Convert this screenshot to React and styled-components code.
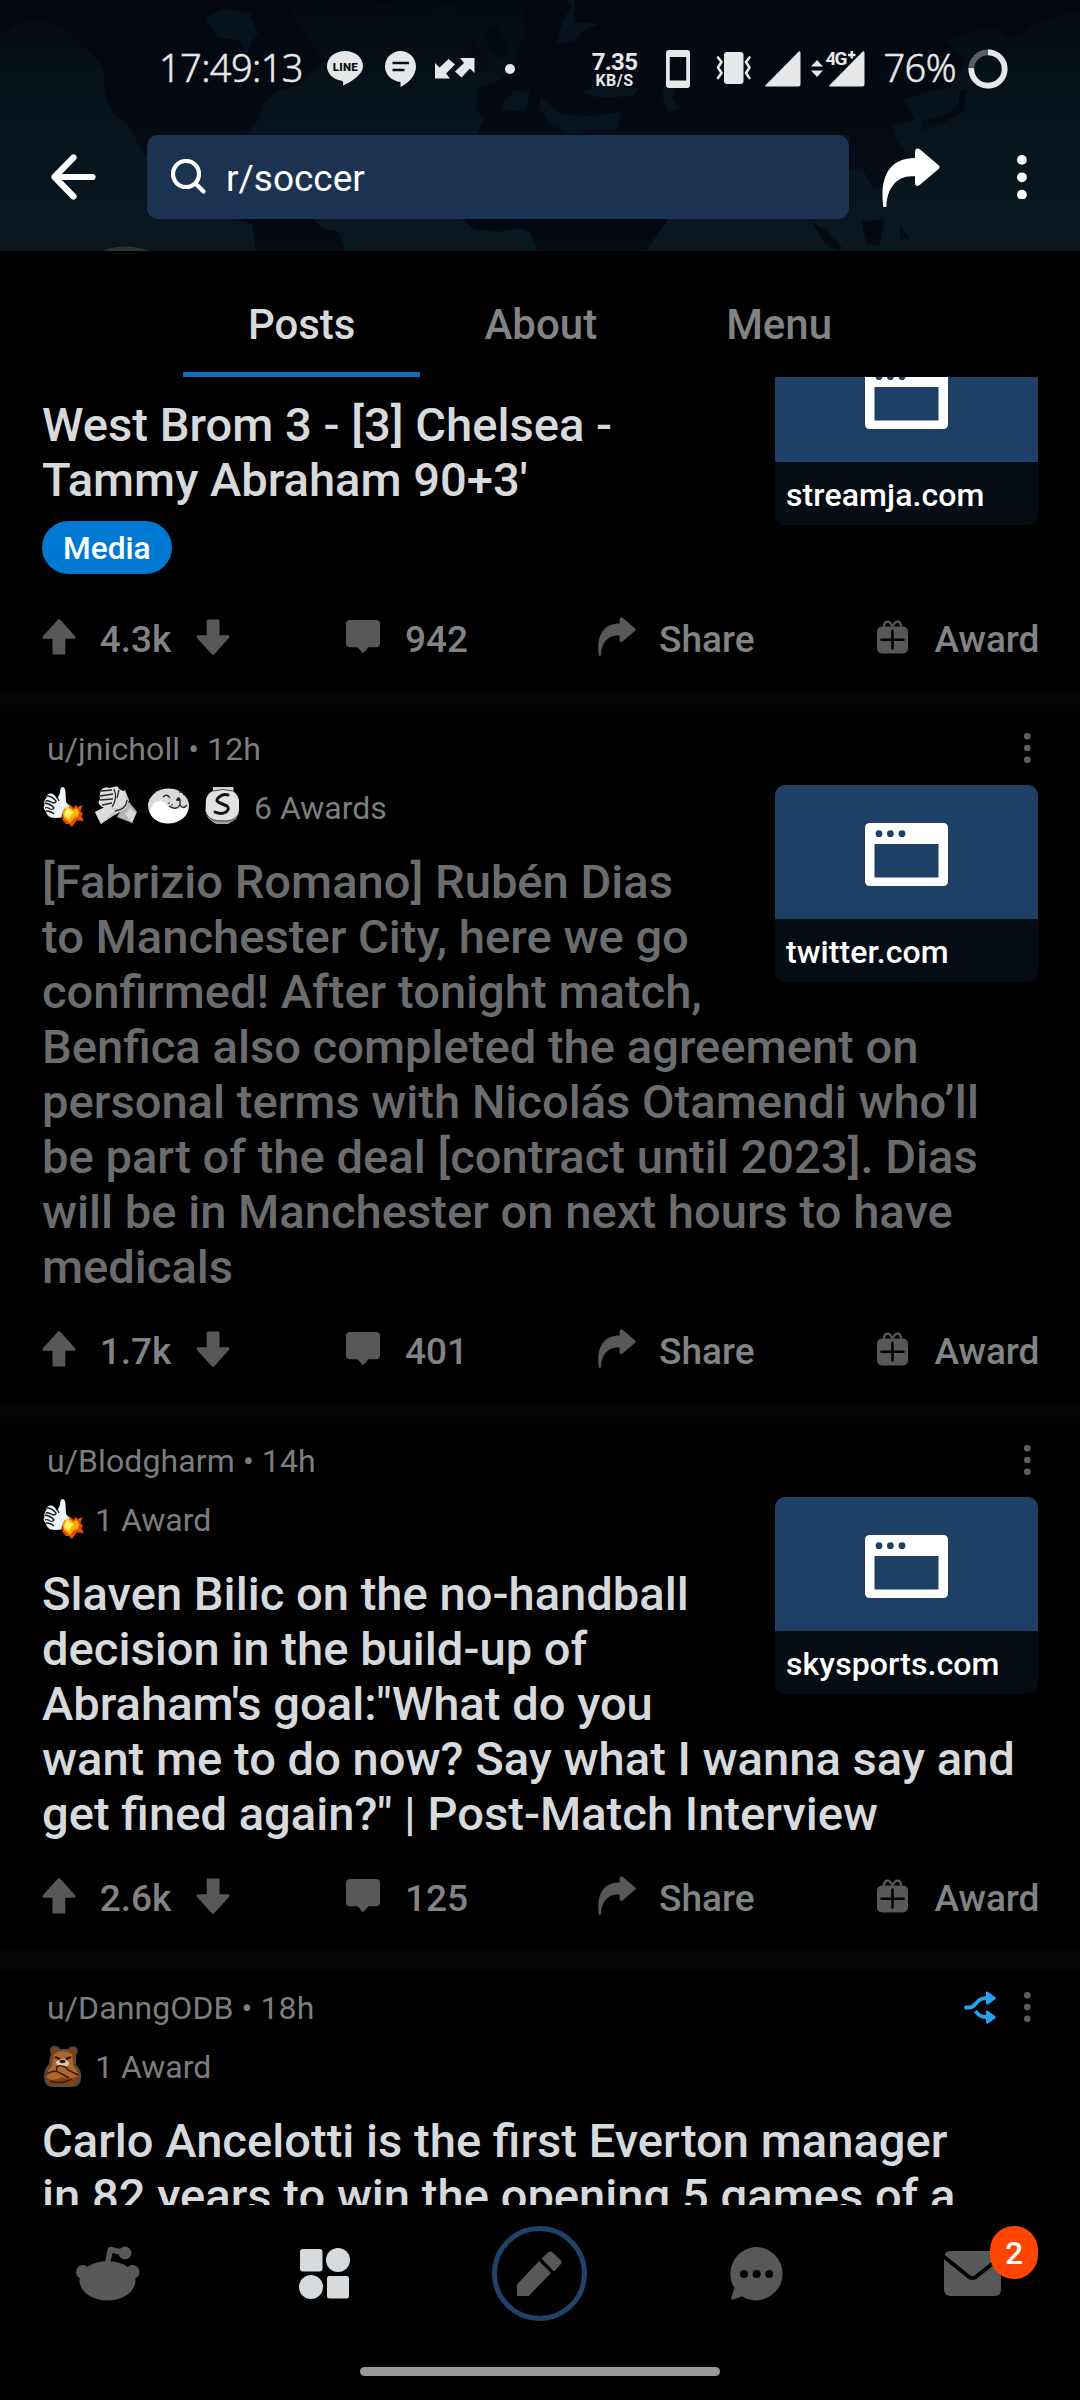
import styled, { createGlobalStyle, css } from "styled-components";

const POSTS = [
  {
    id: 1,
    title: "West Brom 3 - [3] Chelsea - Tammy Abraham 90+3'",
    link: "streamja.com",
    flair: "Media",
    votes: "4.3k",
    comments: "942",
  },
  {
    id: 2,
    author: "jnicholl",
    age: "12h",
    awards: ["rocket", "bump", "seal", "silver"],
    awardLabel: "6 Awards",
    title:
      "[Fabrizio Romano] Rubén Dias to Manchester City, here we go confirmed! After tonight match, Benfica also completed the agreement on personal terms with Nicolás Otamendi who’ll be part of the deal [contract until 2023]. Dias will be in Manchester on next hours to have medicals",
    link: "twitter.com",
    votes: "1.7k",
    comments: "401",
    isRead: true,
  },
  {
    id: 3,
    author: "Blodgharm",
    age: "14h",
    awards: ["rocket"],
    awardLabel: "1 Award",
    title:
      "Slaven Bilic on the no-handball decision in the build-up of Abraham's goal:\"What do you want me to do now? Say what I wanna say and get fined again?\" | Post-Match Interview",
    link: "skysports.com",
    votes: "2.6k",
    comments: "125",
  },
  {
    id: 4,
    author: "DanngODB",
    age: "18h",
    awards: ["bear"],
    awardLabel: "1 Award",
    title: "Carlo Ancelotti is the first Everton manager\nin 82 years to win the opening 5 games of a",
    isCrosspost: true,
  },
];

/* ---------- icons ---------- */

const MapBackdrop = () => (
  <svg width="1080" height="251" viewBox="0 0 1080 251">
    <defs>
      <linearGradient id="ocean" x1="0" y1="0" x2="0" y2="1">
        <stop offset="0" stopColor="#050a11" />
        <stop offset="0.4" stopColor="#07131a" />
        <stop offset="1" stopColor="#09171f" />
      </linearGradient>
      <linearGradient id="land" x1="0" y1="0" x2="0" y2="1">
        <stop offset="0" stopColor="#04070f" />
        <stop offset="1" stopColor="#060c15" />
      </linearGradient>
    </defs>
    <rect width="1080" height="251" fill="url(#ocean)" />
    <path
      d="M0 36L14 24L40 21L62 27L80 44L94 56L103 68L105 96L113 114L126 124L136 140L147 158L165 175L200 190L215 170L246 135L260 118L263 104L276 92L300 84L312 70L326 60L312 44L296 18L288 0L0 0Z"
      fill="url(#land)"
    />
    <path d="M205 18L225 8L250 14L258 34L250 44L247 58L240 40L218 38Z" fill="#07131a" />
    <path d="M334 0L345 12L352 20L367 23L373 8L395 0Z" fill="url(#land)" />
    <path d="M428 4L440 10L455 8L462 0L432 0Z" fill="url(#land)" />
    <path d="M236 219L252 224L256 251L345 251L339 232L322 228L313 219Z" fill="url(#land)" />
    <path d="M463 219L475 230L500 232L520 228L530 233L538 251L646 251L668 219Z" fill="url(#land)" />
    <path d="M474 40L480 52L490 60L486 72L474 70L470 52ZM484 32L496 26L505 40L510 52L498 60L490 48Z" fill="url(#land)" />
    <path
      d="M478 88L476 110L484 120L476 134L540 135L850 135L846 172L862 168L874 190L900 180L920 170L896 140L893 125L915 120L905 100L925 92L950 88L965 62L946 40L975 30L1000 30L1010 40L1040 20L1080 12L1080 0L530 0L522 20L528 32L515 50L516 62L500 80Z"
      fill="url(#land)"
    />
    <path d="M563 20L572 6L566 0L575 0L574 22L600 24L584 30L574 42L556 44Z" fill="#07131a" />
    <path d="M540 96L560 114L590 116L620 112L618 130L594 130L570 134L552 126L540 110ZM580 92L600 86L640 88L632 96L600 98ZM666 82L676 86L672 98L680 108L668 112L662 96Z" fill="#07141b" />
    <path d="M505 100L515 90L530 92L525 110L500 112Z" fill="#07141b" />
    <path d="M812 222L826 230L842 247L838 251L826 245ZM862 222L884 219L880 246L866 244ZM900 226L910 238L900 240Z" fill="url(#land)" />
    <path d="M920 122L946 114L958 106L960 90L966 92L964 112L946 122L924 130Z" fill="url(#land)" />
    <circle cx="125.500" cy="310" r="63.500" fill="#333333" />
  </svg>
);

const LineAppIcon = () => (
  <svg width="36" height="35" viewBox="0 0 36 35">
    <path d="M18 0C8 0 0 6.600 0 15.200c0 7.200 6 13 14.500 14.600 2 .4 1.800 1.600 1.500 4.700 6-2.500 20-10.500 20-19.300C36 6.600 28 0 18 0Z" fill="#e6e7e9" />
    <text x="18.200" y="19.500" textAnchor="middle" fontFamily="Roboto, sans-serif" fontSize="11.500" fontWeight="900" textLength="25" fill="#0a1119">
      LINE
    </text>
  </svg>
);

const BubbleIcon = () => (
  <svg width="31" height="36" viewBox="0 0 31 36">
    <path d="M15.500 0C7 0 0 7 0 15.500S7 30 15.500 31v5C24 32 31 24 31 15.500 31 7 24 0 15.500 0Z" fill="#e6e7e9" />
    <path d="M7.500 12H24M7.500 19H19.500" stroke="#0a1119" strokeWidth="2.600" />
  </svg>
);

const ArrowsIcon = () => (
  <svg width="40" height="21" viewBox="0 0 40 21" fill="#e6e7e9">
    <path d="M0 5L4.500 9.500L13.500 1L20 6.500L11 15.500L15 20.500H0ZM39.500 0V15L35 10.500L26.500 19.500L20 13.500L29 5L25 0Z" />
  </svg>
);

const PhoneIcon = () => (
  <svg width="24" height="38" viewBox="0 0 24 38">
    <path fillRule="evenodd" d="M3 0H21Q24 0 24 3V35Q24 38 21 38H3Q0 38 0 35V3Q0 0 3 0ZM3.800 7V30.500H20.200V7Z" fill="#e6e7e9" />
  </svg>
);

const VibrateIcon = () => (
  <svg width="36" height="33" viewBox="0 0 36 33">
    <rect x="8" width="19.500" height="32" rx="3" fill="#e6e7e9" />
    <path d="M2 5.500L5.500 10L2 15.500L5.500 21L2 26M33.500 5.500L30 10L33.500 15.500L30 21L33.500 26" fill="none" stroke="#e6e7e9" strokeWidth="2.600" strokeLinecap="round" strokeLinejoin="round" />
  </svg>
);

const SignalIcon = () => (
  <svg width="36" height="36" viewBox="0 0 36 36">
    <path d="M33.500 .8Q35.500 -.5 35.500 2V33.500Q35.500 35.500 33.500 35.500H1.500Q-.5 35.500 1 33.800Z" fill="#e6e7e9" />
  </svg>
);

const Signal4GIcon = () => (
  <svg width="54" height="36" viewBox="0 0 54 36">
    <path d="M6 9L12 15.500H0ZM6 26L12 19.500H0Z" fill="#e6e7e9" />
    <path d="M51.500 .8Q53.500 -.5 53.500 2V33.500Q53.500 35.500 51.500 35.500H19.500Q17.500 35.500 19 33.800Z" fill="#e6e7e9" />
    <text x="14.500" y="14" fontFamily="Roboto, sans-serif" fontSize="19" fontWeight="700" textLength="22" fill="#e6e7e9" stroke="#060b13" strokeWidth="2" paintOrder="stroke">
      4G
    </text>
    <path d="M37.500 4H44.500M41 .5V7.500" stroke="#060b13" strokeWidth="5" />
    <path d="M37 4H44.500M40.800 0V7.500" stroke="#e6e7e9" strokeWidth="2.500" />
  </svg>
);

const BatteryRing = () => (
  <svg width="40" height="40" viewBox="0 0 40 40" fill="none" strokeWidth="5.700">
    <circle cx="20" cy="20" r="16.700" stroke="#5c6065" />
    <path d="M20 3.300A16.700 16.700 0 1 1 3.300 19.200" stroke="#e6e7e9" />
  </svg>
);

const BackIcon = () => (
  <svg width="46" height="46" viewBox="0 0 46 46" fill="none" stroke="#fff" strokeWidth="6.200" strokeLinecap="round" strokeLinejoin="round">
    <path d="M22.500 3.500L3.500 23L22.500 42.500M4 23H41.500" />
  </svg>
);

const SearchIcon = () => (
  <svg width="36" height="36" viewBox="0 0 36 36" fill="none" stroke="#fff" strokeWidth="4.200" strokeLinecap="round">
    <circle cx="15" cy="15" r="13" />
    <path d="M24.500 24.500L32.500 32.500" />
  </svg>
);

const ShareIcon = ({ size, color }) => (
  <svg width={size} height={size * 1.03} viewBox="0 0 58 60" fill={color}>
    <path d="M33 10V4Q33 1 35 .6Q37 .4 38.500 1.800L57 17.500Q58.500 19 57 20.800L38 37Q36 38.600 34.500 38Q33 37.500 33 35V28.500C17 26.500 5 38 4.400 58Q4 60 2.500 60Q1.200 60 1 58C-2.500 28 8 10 33 10Z" />
  </svg>
);

const UpIcon = () => (
  <svg width="34" height="36" viewBox="0 0 34 36" fill="#575859">
    <path d="M16 .6Q17 -.2 18 .6L33.300 17.500Q34 19.500 32 19.800H23.300V34.500Q23.300 35.500 22.300 35.500H11.500Q10.500 35.500 10.500 34.500V19.800H2Q0 19.500 .7 17.500Z" />
  </svg>
);

const CommentIcon = () => (
  <svg width="34" height="34" viewBox="0 0 34 34" fill="#575859">
    <path d="M4 0H30Q34 0 34 4V23.500Q34 27.300 30 27.300H22.500L17.800 32.600Q17 33.500 16.200 32.600L11.500 27.300H4Q0 27.300 0 23.500V4Q0 0 4 0Z" />
  </svg>
);

const GiftIcon = () => (
  <svg width="31" height="34" viewBox="0 0 31 34">
    <rect y="6.500" width="31" height="27" rx="5" fill="#575859" />
    <path d="M15.500 6.500C12 -1 7.500 1 6.800 6.800M15.500 6.500C19 -1 23.500 1 24.200 6.800" fill="none" stroke="#575859" strokeWidth="2.400" />
    <path d="M4.500 19.800H26.500M15.500 10.500V28.500" stroke="#000" strokeWidth="2.600" strokeLinecap="round" />
  </svg>
);

const DotsIcon = ({ r, gap, color }) => (
  <svg width={r * 2} height={gap * 2 + r * 2} fill={color}>
    <circle cx={r} cy={r} r={r} />
    <circle cx={r} cy={r + gap} r={r} />
    <circle cx={r} cy={r + gap * 2} r={r} />
  </svg>
);

const CrosspostIcon = () => (
  <svg width="32" height="33" viewBox="0 0 32 33">
    <path d="M2 16.500H5C13 16.500 11 7 23 7M11.500 20C14 23.500 16 26 23 26" fill="none" stroke="#24a0ed" strokeWidth="3.800" />
    <circle cx="2" cy="16.500" r="1.900" fill="#24a0ed" />
    <path d="M22 2Q22 0 24 .8L31 6Q32.500 7.200 31 8.500L24 13.500Q22 14.200 22 12ZM22 21Q22 19 24 19.800L31 25Q32.500 26.200 31 27.500L24 32.500Q22 33.200 22 31Z" fill="#24a0ed" />
  </svg>
);

const BrowserIcon = () => (
  <svg width="83" height="63" viewBox="0 0 83 63">
    <path fillRule="evenodd" d="M5 0H78Q83 0 83 5V58Q83 63 78 63H5Q0 63 0 58V5Q0 0 5 0ZM9.500 21V54.500H73.500V21Z" fill="#fff" />
    <g fill="#1e4067">
      <circle cx="14" cy="10.700" r="3.400" />
      <circle cx="25.400" cy="10.700" r="3.400" />
      <circle cx="37" cy="10.700" r="3.400" />
    </g>
  </svg>
);

const AWARD_ART = {
  rocket: (
    <>
      <path d="M27 18L32 22L33 19L36 21L40.800 19L38.500 25L41 28L39.500 30L42 35L34.500 34.500L30 41L27 38L24 38L20.500 34L20 26Z" fill="#e8480c" />
      <path d="M26 19L31 24L35 22L37 26L36 31L32 32L28 37L22 32L21 26Z" fill="#ffb400" />
      <path d="M25 21L29 25L32 26L29 29L27 33L22 29Z" fill="#fff36b" />
      <path d="M18 7Q18 1 20.500 1Q23 1 23.500 6L24 16L27.500 20Q20 22 19.500 31.500L14 32L9 31.500Q5 30 3.500 25Q.5 22 2.500 19Q1.500 14 4.500 12Q4 8 8 7.500Q12 7 15 13Z" fill="#eef4f7" />
      <path d="M5 10Q10 10 14 15Q14 17 11 17Q6 14 3.500 15M3 17Q9 18 12 22Q11 24 8 23Q5 21 3 22M4 25Q9 25 12 28M15 11L17 15" fill="none" stroke="#15191c" strokeWidth="1.300" />
    </>
  ),
  bump: (
    <>
      <path d="M26 24L34 16L42 26L37 37L22 31Z" fill="#b4b4b4" />
      <path d="M30 28L37 37L41 27L35 22Z" fill="#d8d8d8" />
      <path d="M0 26L14 19L22 8L30 4L34 14L32 22L18 30L6 38Z" fill="#c9c9c9" />
      <path d="M0 26L10 21L20 24L6 38Z" fill="#dcdcdc" />
      <path d="M6 4Q10 0 14 2L19 1Q23 -1 24 3L30 6L31 17Q27 23 19 22Q8 23 5 19Q2 17 5 13Q4 9 6 4Z" fill="#dedede" />
      <path d="M6 5L17 4M5 10L18 8M5 14L18 13M7 19L17 17M19 3Q23 12 17 21M24 4L22 12M20 25Q31 24 32 14" fill="none" stroke="#2c2c2c" strokeWidth="1.300" />
    </>
  ),
  seal: (
    <>
      <ellipse cx="20.500" cy="20" rx="20.500" ry="17.500" fill="#d9d9d9" />
      <path d="M2 26Q4 16 11 15Q18 15 20 21Q26 26 39 20Q41 27 34 33Q26 38 16 37Q4 35 2 26Z" fill="#fff" />
      <path d="M15 11Q19 7 22 12M31 6Q35 5 36 9M21 20Q28 25 32 19Q35 24 39 19M28 14H32L32 20" fill="none" stroke="#222" strokeWidth="1.300" />
      <circle cx="30.500" cy="13" r="1.800" fill="#222" />
      <circle cx="21" cy="17" r=".8" fill="#222" />
      <circle cx="24" cy="19" r=".8" fill="#222" />
    </>
  ),
  silver: (
    <>
      <path d="M12 1H32.500V7H12Z" fill="#cfcfcf" />
      <path d="M5 28L8 33L15 38H27L35 33L38 27Z" fill="#a5a5a5" />
      <path d="M5 13Q7 5 16 4H27Q36 5 38 14V25Q36 33 27 34H16Q6 32 4.500 25Z" fill="#e2e2e2" />
      <path d="M12 5Q22 2 32 5M5 27Q8 34 17 35H27Q35 34 38 27" fill="none" stroke="#4b4b4b" strokeWidth="1" />
      <path d="M27 9Q22 7 17 12Q14 15 19 17L26 20Q29 23 25 26Q20 29 14 26" fill="none" stroke="#111" strokeWidth="3" strokeLinecap="round" strokeLinejoin="round" />
    </>
  ),
  bear: (
    <>
      <path d="M9 9Q6 3 11 1Q16 0 18 4L26 4Q29 0 34 2Q38 5 34 10L34 20Q40 24 39 33Q39 41 31 42H11Q2 42 2 32Q2 23 7 19Q7 13 9 9Z" fill="#4a4a4a" />
      <path d="M10 8Q8 4 11.500 2.500Q15 2 17 5.500H27Q29 2 32.500 3Q36 6 33 9.500L32.500 21Q38 25 37.500 33Q37 39 30 40.500H12Q4 40 3.800 32Q4 24 9 20Q8 12 10 8Z" fill="#7d4218" />
      <path d="M12 9Q20 3 30 9L31 20Q36 26 36 31Q28 36 20 32Q12 37 5 33Q5 25 10 21Z" fill="#b0662b" />
      <path d="M14 17Q20 11 27 17Q28 22 20 22Q14 21 14 17Z" fill="#d8c9b0" />
      <ellipse cx="20.500" cy="16.500" rx="3" ry="1.700" fill="#2a1a10" />
      <path d="M13 12L18 14M29 12L24 14" fill="none" stroke="#1c0f06" strokeWidth="2.200" />
      <path d="M5 29Q12 24 18 28L27 33M8 36Q18 40 30 34M15 26Q13 20 19 21Q24 21 26 25L36 30" fill="none" stroke="#3a1c08" strokeWidth="1.500" />
    </>
  ),
};

const NAV_ICONS = {
  home: (
    <svg width="64" height="55" viewBox="0 0 64 55" fill="#575859">
      <ellipse cx="31.500" cy="34.700" rx="28" ry="19.800" />
      <circle cx="7" cy="26" r="7" />
      <circle cx="56.500" cy="26" r="7" />
      <circle cx="49" cy="7" r="6.500" />
      <path d="M31.500 17L34.500 3.500L49 7" fill="none" stroke="#575859" strokeWidth="5.500" strokeLinejoin="round" />
    </svg>
  ),
  browse: (
    <svg width="51" height="51" viewBox="0 0 51 51" fill="#d7dadc">
      <rect x="1" y="1" width="22.500" height="22.500" rx="3" />
      <circle cx="39" cy="12" r="12" />
      <circle cx="12" cy="39" r="12" />
      <rect x="28" y="28" width="22" height="22.500" rx="2.500" />
    </svg>
  ),
  chat: (
    <svg width="54" height="54" viewBox="0 0 54 54">
      <path d="M27 0A26.700 26.700 0 1 1 12 49.500L3 52.500Q.8 53 1.300 50.500L4.500 41A26.700 26.700 0 0 1 27 0Z" fill="#575859" />
      <circle cx="14" cy="27" r="4" />
      <circle cx="26.700" cy="27" r="4" />
      <circle cx="39.200" cy="27" r="4" />
    </svg>
  ),
  inbox: (
    <svg width="57" height="45" viewBox="0 0 57 45">
      <rect width="57" height="45" rx="6" fill="#575859" />
      <path d="M-1 5L24.500 25.500Q28.500 28.500 32.500 25.500L58 5" fill="none" stroke="#000" strokeWidth="4" />
    </svg>
  ),
};

const PencilIcon = () => (
  <svg width="46" height="46" viewBox="0 0 46 46" fill="#575859">
    <path d="M0 33.500L22 10L34 22L11.500 45H0ZM24.500 7.500L31 1.500Q33.500 -.5 36 1.800L43.500 9Q45.500 11.500 43.500 13.500L37 20.500Z" />
  </svg>
);

/* ---------- pieces ---------- */

const ActionBar = ({ votes, comments }) => (
  <Actions>
    <Votes>
      <UpIcon />
      <Label>{votes}</Label>
      <Flip>
        <UpIcon />
      </Flip>
    </Votes>
    <Action $gap={25.5}>
      <CommentIcon />
      <Label>{comments}</Label>
    </Action>
    <Action $gap={23.5}>
      <ShareIcon size={38} color="#575859" />
      <Label>Share</Label>
    </Action>
    <Action $gap={27}>
      <GiftIcon />
      <Label>Award</Label>
    </Action>
  </Actions>
);

const Post = ({ post }) => (
  <Article>
    <Meta>
      {post.author && (
        <>
          <Byline>
            u/{post.author} • {post.age}
          </Byline>
          {post.isCrosspost && <CrosspostIcon />}
          <DotsIcon r={3.3} gap={11.7} color="#5d5e5f" />
        </>
      )}
    </Meta>
    <Body>
      {post.link && (
        <Thumb>
          <Preview>
            <BrowserIcon />
          </Preview>
          <Domain>{post.link}</Domain>
        </Thumb>
      )}
      <Awards>
        {post.awards?.map((name) => (
          <svg key={name} width="42" height="42" viewBox="0 0 42 42">
            {AWARD_ART[name]}
          </svg>
        ))}
        {post.awardLabel && <AwardCount>{post.awardLabel}</AwardCount>}
      </Awards>
      <Title $dim={post.isRead}>{post.title}</Title>
      {post.flair && <Flair>{post.flair}</Flair>}
    </Body>
    {post.votes && <ActionBar votes={post.votes} comments={post.comments} />}
  </Article>
);

const App = () => {
  return (
    <>
      <GlobalStyle />
      <Screen>
        <Header>
          <Backdrop>
            <MapBackdrop />
          </Backdrop>
          <StatusBar>
            <Clock>17:49:13</Clock>
            <Slot $before={23}><LineAppIcon /></Slot>
            <Slot $before={21.5}><BubbleIcon /></Slot>
            <Slot $before={19}><ArrowsIcon /></Slot>
            <Slot $before={30}><Bullet /></Slot>
            <Speed>
              <b>7.35</b>
              <small>KB/S</small>
            </Speed>
            <Slot $before={27}><PhoneIcon /></Slot>
            <Slot $before={26}><VibrateIcon /></Slot>
            <Slot $before={13}><SignalIcon /></Slot>
            <Slot $before={10}><Signal4GIcon /></Slot>
            <Percent>76%</Percent>
            <BatteryRing />
          </StatusBar>
          <Toolbar>
            <BackIcon />
            <SearchBox>
              <SearchIcon />
              <span>r/soccer</span>
            </SearchBox>
            <ShareIcon size={58} color="#fff" />
            <DotsIcon r={4.9} gap={17.4} color="#fff" />
          </Toolbar>
        </Header>
        <Tabs>
          <Tab $active>Posts</Tab>
          <Tab>About</Tab>
          <Tab>Menu</Tab>
        </Tabs>
        <Feed>
          {POSTS.map((post) => (
            <Post key={post.id} post={post} />
          ))}
        </Feed>
        <BottomNav>
          <NavItem>{NAV_ICONS.home}</NavItem>
          <NavItem>{NAV_ICONS.browse}</NavItem>
          <NavItem>
            <Compose>
              <PencilIcon />
            </Compose>
          </NavItem>
          <NavItem $nudge={2}>{NAV_ICONS.chat}</NavItem>
          <NavItem>
            {NAV_ICONS.inbox}
            <Badge>2</Badge>
          </NavItem>
        </BottomNav>
        <HomeBar />
      </Screen>
    </>
  );
};

/* ---------- styles ---------- */

const GlobalStyle = createGlobalStyle`
  * {
    box-sizing: border-box;
  }

  body {
    margin: 0;
    background: #000;
  }

  svg {
    display: block;
    flex: none;
  }
`;

const Screen = styled.div`
  width: 1080px;
  height: 2400px;
  display: flex;
  flex-direction: column;
  align-items: center;
  overflow: hidden;
  background: #000;
  color: #d7dadc;
  font-family: Roboto, sans-serif;
`;

const Header = styled.header`
  position: relative;
  width: 100%;
  height: 251px;
  flex: none;
  overflow: hidden;
`;

const Backdrop = styled.div`
  position: absolute;
  inset: 0;
`;

const StatusBar = styled.div`
  position: relative;
  height: 135px;
  display: flex;
  align-items: center;
  padding: 2px 0 0 159px;
`;

const slate = css`
  padding-bottom: 3px;
  color: #e6e7e9;
  font-family: "Noto Sans", sans-serif;
  font-size: 38px;
  font-weight: 300;
  line-height: 40px;
  letter-spacing: -0.6px;
  white-space: nowrap;
  -webkit-text-stroke: 0.5px #e6e7e9;
`;

const Clock = styled.div`
  ${slate}
  width: 145px;
`;

const Percent = styled.div`
  ${slate}
  width: 74px;
  margin: 0 10px 0 19px;
`;

const Slot = styled.div`
  margin-left: ${(p) => p.$before}px;
`;

const Bullet = styled.div`
  width: 10px;
  height: 10px;
  border-radius: 50%;
  background: #e6e7e9;
`;

const Speed = styled.div`
  width: 48px;
  margin-left: 76px;
  padding-top: 3px;
  display: flex;
  flex-direction: column;
  align-items: center;
  color: #e6e7e9;
  white-space: nowrap;

  b {
    font-size: 24px;
    line-height: 22px;
    letter-spacing: -0.7px;
  }

  small {
    font-size: 16px;
    font-weight: 700;
    line-height: 16px;
    letter-spacing: 0.5px;
  }
`;

const Toolbar = styled.div`
  position: relative;
  height: 84px;
  display: flex;
  align-items: center;
  padding-left: 51px;

  > svg:nth-of-type(2) {
    margin: 1px 77px 0 33px;
  }
`;

const SearchBox = styled.div`
  width: 702px;
  height: 84px;
  margin-left: 50px;
  padding-left: 24px;
  display: flex;
  align-items: center;
  gap: 19px;
  border-radius: 11px;
  background: #1b3250;
  color: #fff;
  font-size: 37px;

  span {
    padding-top: 2px;
  }
`;

const Tabs = styled.nav`
  height: 126px;
  flex: none;
  display: flex;
`;

const Tab = styled.div`
  padding: 53px 64.5px 0;
  border-bottom: 5px solid ${(p) => (p.$active ? "#0b6fbf" : "transparent")};
  color: ${(p) => (p.$active ? "#d7dadc" : "#818384")};
  font-size: 42px;
  font-weight: 500;
  line-height: 42px;
`;

const Feed = styled.main`
  width: 100%;
  height: 1828px;
  flex: none;
  overflow: hidden;

  > :first-child {
    margin-top: -123px;
  }
`;

const Article = styled.article`
  border-bottom: 21px solid #040404;
`;

const Meta = styled.div`
  height: 74px;
  display: flex;
  align-items: center;
  gap: 28px;
  padding: 0 49px 0 47px;
`;

const Byline = styled.div`
  flex: 1;
  padding-top: 1px;
  color: #7b7d7e;
  font-size: 32px;
  letter-spacing: 0.1px;
`;

const Body = styled.div`
  display: flow-root;
  padding: 0 42px;
`;

const Thumb = styled.div`
  float: right;
  width: 263px;
  height: 197px;
  margin-left: 60px;
  overflow: hidden;
  border-radius: 10px;
  background: #060c13;
`;

const Preview = styled.div`
  height: 134px;
  display: flex;
  align-items: center;
  justify-content: center;
  padding-top: 5px;
  background: #1e4067;
`;

const Domain = styled.div`
  padding-left: 11px;
  color: #fff;
  font-size: 32px;
  font-weight: 500;
  line-height: 66px;
  letter-spacing: 0.1px;
`;

const Awards = styled.div`
  height: 70px;
  display: flex;
  align-items: flex-start;
  gap: 11px;
  padding-top: 1px;
`;

const AwardCount = styled.div`
  color: #7b7d7e;
  font-size: 32px;
  line-height: 45px;
`;

const Title = styled.h2`
  margin: 0;
  padding-bottom: 1px;
  color: ${(p) => (p.$dim ? "#6b6c6e" : "#d7dadc")};
  font-size: 47.13px;
  font-weight: 500;
  line-height: 55px;
  white-space: pre-line;
`;

const Flair = styled.div`
  width: fit-content;
  height: 53px;
  margin: 12px 0 10px;
  padding: 0 21px;
  border-radius: 27px;
  background: #0079d3;
  color: #fff;
  font-size: 31.7px;
  font-weight: 500;
  line-height: 56px;
`;

const Actions = styled.div`
  height: 106px;
  display: grid;
  grid-template-columns: 304px 252px 279px auto;
  align-items: center;
  padding-left: 41.5px;
`;

const Votes = styled.div`
  display: grid;
  grid-template-columns: 34px 120px 34px;
  align-items: center;
  text-align: center;
`;

const Flip = styled.div`
  transform: rotate(180deg);
`;

const Action = styled.div`
  display: flex;
  align-items: center;
  gap: ${(p) => p.$gap}px;
`;

const Label = styled.span`
  padding-top: 5px;
  color: #818384;
  font-size: 37px;
  font-weight: 500;
`;

const BottomNav = styled.nav`
  width: 100%;
  height: 137px;
  flex: none;
  display: grid;
  grid-template-columns: repeat(5, 216px);
`;

const NavItem = styled.div`
  position: relative;
  display: flex;
  align-items: center;
  justify-content: center;
  padding-left: ${(p) => p.$nudge || 0}px;
`;

const Compose = styled.div`
  width: 95px;
  height: 95px;
  margin-right: 1px;
  display: flex;
  align-items: center;
  justify-content: center;
  border: 5px solid #1f4268;
  border-radius: 50%;
`;

const Badge = styled.div`
  position: absolute;
  top: 21px;
  left: 126px;
  width: 48px;
  height: 53px;
  border-radius: 24px;
  background: #ff4500;
  color: #fff;
  font-size: 32px;
  font-weight: 500;
  line-height: 55px;
  text-align: center;
`;

const HomeBar = styled.div`
  width: 360px;
  height: 9px;
  margin-top: 25px;
  border-radius: 5px;
  background: #9a9a9a;
`;

export default App;
